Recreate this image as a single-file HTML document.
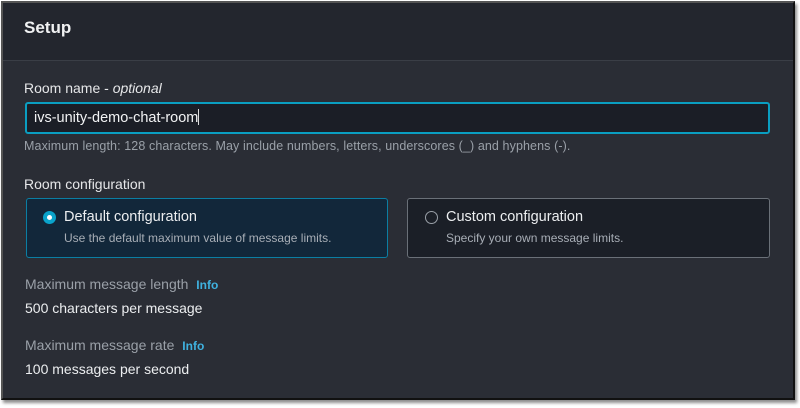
<!DOCTYPE html>
<html><head><style>
*{margin:0;padding:0;box-sizing:border-box}
body{width:800px;height:408px;background:#fff;font-family:"Liberation Sans",sans-serif;position:relative;overflow:hidden}
.panel{position:absolute;left:1px;top:1px;width:794px;height:399px;background:#2a2d35;border:2px solid #111;border-top-color:#555;border-left-color:#555;box-shadow:2px 3px 3px rgba(0,0,0,.45)}
.hdr{position:absolute;left:0;top:0;right:0;height:58px;background:#23262e;border-bottom:1px solid #3a3e46}
.t{position:absolute;white-space:nowrap}
.input{position:absolute;left:22px;top:99px;width:745px;height:32px;border:2px solid #0a9ec1;border-radius:3px;background:#1b1e26}
.card{position:absolute;top:195px;height:60px;border-radius:3px}
.radio{position:absolute;width:13px;height:13px;border-radius:50%}
</style></head><body>
<div class="panel">
<div class="hdr"></div>
<div class="t" style="left:21px;top:15px;font-size:17px;font-weight:bold;color:#f0f1f2">Setup</div>
<div class="t" style="left:21px;top:77px;font-size:14px;color:#e6e7e9">Room name - <i>optional</i></div>
<div class="input"></div>
<div class="t" style="left:31px;top:106px;font-size:14.5px;color:#f2f3f4">ivs-unity-demo-chat-room<span style="display:inline-block;width:1px;height:16px;background:#ddd;vertical-align:-3px"></span></div>
<div class="t" style="left:21px;top:136px;font-size:12.5px;color:#9aa0a8;letter-spacing:.1px">Maximum length: 128 characters. May include numbers, letters, underscores (_) and hyphens (-).</div>
<div class="t" style="left:21px;top:173px;font-size:14px;color:#e6e7e9">Room configuration</div>
<div class="card" style="left:23px;width:362px;background:#12273a;border:1px solid #0b7ea3"></div>
<div class="radio" style="left:40px;top:208px;background:#fff;border:4px solid #0aa3cb"></div>
<div class="t" style="left:61px;top:206px;font-size:14.5px;color:#eceef0">Default configuration</div>
<div class="t" style="left:61px;top:228px;font-size:12px;color:#a8aeb6">Use the default maximum value of message limits.</div>
<div class="card" style="left:404px;width:363px;background:#1b1f27;border:1px solid #6a7078"></div>
<div class="radio" style="left:422px;top:208px;border:1.5px solid #9aa0a8"></div>
<div class="t" style="left:443px;top:206px;font-size:14.5px;color:#eceef0">Custom configuration</div>
<div class="t" style="left:443px;top:228px;font-size:12px;color:#a8aeb6">Specify your own message limits.</div>
<div class="t" style="left:22px;top:273px;font-size:14px;color:#9aa0a8">Maximum message length <b style="color:#3fb2e0;font-size:12px;margin-left:4px">Info</b></div>
<div class="t" style="left:22px;top:297px;font-size:14px;color:#eceef0">500 characters per message</div>
<div class="t" style="left:22px;top:334px;font-size:14px;color:#9aa0a8">Maximum message rate <b style="color:#3fb2e0;font-size:12px;margin-left:4px">Info</b></div>
<div class="t" style="left:22px;top:358px;font-size:14px;color:#eceef0">100 messages per second</div>
</div>
</body></html>
